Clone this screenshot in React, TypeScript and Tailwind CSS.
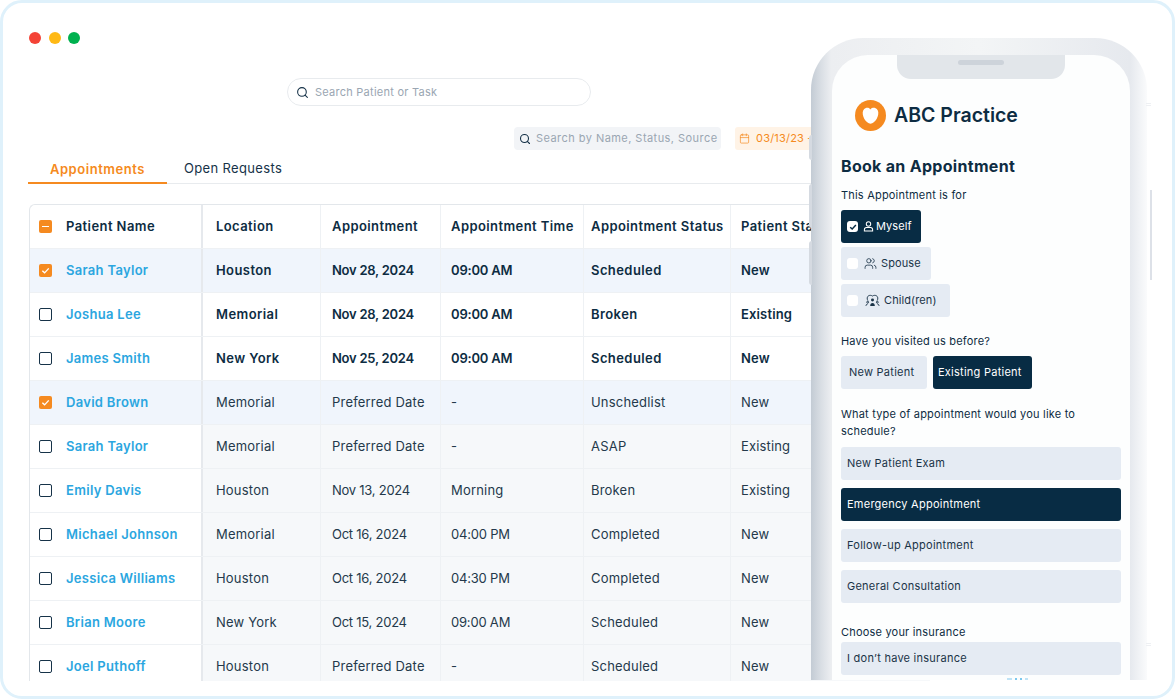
import { Search, Calendar, Users } from "lucide-react";

type Row = { name: string; loc: string; date: string; time: string; status: string; patient: string; checked?: boolean; bold?: boolean };

const rows: Row[] = [
  { name: "Sarah Taylor", loc: "Houston", date: "Nov 28, 2024", time: "09:00 AM", status: "Scheduled", patient: "New", checked: true, bold: true },
  { name: "Joshua Lee", loc: "Memorial", date: "Nov 28, 2024", time: "09:00 AM", status: "Broken", patient: "Existing", bold: true },
  { name: "James Smith", loc: "New York", date: "Nov 25, 2024", time: "09:00 AM", status: "Scheduled", patient: "New", bold: true },
  { name: "David Brown", loc: "Memorial", date: "Preferred Date", time: "-", status: "Unschedlist", patient: "New", checked: true },
  { name: "Sarah Taylor", loc: "Memorial", date: "Preferred Date", time: "-", status: "ASAP", patient: "Existing" },
  { name: "Emily Davis", loc: "Houston", date: "Nov 13, 2024", time: "Morning", status: "Broken", patient: "Existing" },
  { name: "Michael Johnson", loc: "Memorial", date: "Oct 16, 2024", time: "04:00 PM", status: "Completed", patient: "New" },
  { name: "Jessica Williams", loc: "Houston", date: "Oct 16, 2024", time: "04:30 PM", status: "Completed", patient: "New" },
  { name: "Brian Moore", loc: "New York", date: "Oct 15, 2024", time: "09:00 AM", status: "Scheduled", patient: "New" },
  { name: "Joel Puthoff", loc: "Houston", date: "Preferred Date", time: "-", status: "Scheduled", patient: "New" },
];

const gridCols = "grid grid-cols-[173px_117px_120px_143px_147px_200px]";

function Check({ state }: { state: "on" | "off" | "minus" }) {
  if (state === "off") return <span className="block w-[13px] h-[13px] rounded-[2px] border-[1.5px] border-[#163248] bg-white shrink-0" />;
  return (
    <span className="flex items-center justify-center w-[13px] h-[13px] rounded-[2px] bg-[#f58a20] shrink-0">
      {state === "on" ? (
        <svg width="9" height="9" viewBox="0 0 10 10" fill="none"><path d="M1.5 5.2 4 7.6 8.6 2.6" stroke="#fff" strokeWidth="1.5" /></svg>
      ) : (
        <span className="block w-[7px] h-[1.5px] bg-white" />
      )}
    </span>
  );
}

function Cell({ pad, bg, children }: { pad: string; bg: string; children: React.ReactNode }) {
  return <div className={`flex items-center border-l border-[#eef1f4] ${pad} ${bg} whitespace-nowrap`}>{children}</div>;
}

function PersonIcon({ className }: { className: string }) {
  return (
    <svg className={className} viewBox="0 0 12 12" fill="none" stroke="currentColor" strokeWidth="1.100">
      <circle cx="6" cy="3.200" r="2.400" />
      <path d="M1.500 11h9V9.500A2.300 2.300 0 0 0 8.200 7.200H3.800A2.300 2.300 0 0 0 1.500 9.500z" />
    </svg>
  );
}

function ChildIcon({ className }: { className: string }) {
  return (
    <svg className={className} viewBox="0 0 16 14" fill="none" stroke="currentColor" strokeWidth="1">
      <path d="M3 7C1.800 5.500 2 2.600 4 1.800c1.300-.6 2.800-.4 4 .4 1.200-.8 2.700-1 4-.4 2 .8 2.200 3.700 1 5.200" />
      <circle cx="8" cy="6.500" r="1.600" fill="currentColor" stroke="none" />
      <path d="M5.500 12.800c0-2.200 1-3.200 2.500-3.200s2.500 1 2.500 3.200z" fill="currentColor" stroke="none" />
      <circle cx="2.800" cy="8.800" r="1" />
      <circle cx="13.200" cy="8.800" r="1" />
      <path d="M1 12.800c0-1.300.7-2 1.800-2M15 12.800c0-1.300-.7-2-1.800-2" />
    </svg>
  );
}

function Table() {
  return (
    <div className="mt-5 ml-px h-[477px] overflow-hidden rounded-tl-md border-l border-t border-[#e3e7eb] text-[13px] tracking-[0.42px] text-[#0d2c42] w-[1100px]">
      <div className={`${gridCols} h-[44px] font-semibold border-b border-[#eef1f4]`}>
        <div className="flex items-center gap-[14px] pl-[9px] border-r-2 border-[#e6e9ed]">
          <Check state="minus" />
          <span>Patient Name</span>
        </div>
        <div className="flex items-center pl-[13px]">Location</div>
        <div className="flex items-center pl-[11px] border-l border-[#eef1f4]">Appointment</div>
        <div className="flex items-center pl-[10px] border-l border-[#eef1f4] whitespace-nowrap">Appointment Time</div>
        <div className="flex items-center pl-[7px] border-l border-[#eef1f4] whitespace-nowrap">Appointment Status</div>
        <div className="flex items-center pl-[10px] border-l border-[#eef1f4] whitespace-nowrap">Patient Status</div>
      </div>
      {rows.map((r, i) => {
        const bg = r.checked ? "bg-[#f0f5fc]" : r.bold ? "bg-white" : "bg-[#f6f8fa]";
        const left = r.checked ? "bg-[#f0f5fc]" : "bg-white";
        const weight = r.bold ? "font-semibold" : "font-normal text-[#24394b] tracking-[0.2px]";
        return (
          <div key={i} className={`${gridCols} h-[44px] border-b border-[#eef1f4] ${weight}`}>
            <div className={`flex items-center gap-[14px] pl-[9px] border-r-2 border-[#e6e9ed] ${left}`}>
              <Check state={r.checked ? "on" : "off"} />
              <span className="font-semibold text-[#2ba6e0] whitespace-nowrap tracking-[0.3px]">{r.name}</span>
            </div>
            <div className={`flex items-center pl-[13px] whitespace-nowrap ${bg}`}>{r.loc}</div>
            <Cell pad="pl-[11px]" bg={bg}><span className={/\d/.test(r.date) ? "tracking-[-0.25px]" : ""}>{r.date}</span></Cell>
            <Cell pad="pl-[10px]" bg={bg}><span className={/\d/.test(r.time) ? "tracking-[-0.2px]" : ""}>{r.time}</span></Cell>
            <Cell pad="pl-[7px]" bg={bg}>{r.status}</Cell>
            <Cell pad="pl-[10px]" bg={bg}><span className="tracking-[0.15px]">{r.patient}</span></Cell>
          </div>
        );
      })}
    </div>
  );
}

function Logo() {
  return (
    <svg width="31" height="31" viewBox="0 0 31 31" className="shrink-0">
      <circle cx="15.500" cy="15.500" r="15.500" fill="#f58a20" />
      <path d="M15.500 9.200c-1.200-1.100-3-1.700-4.700-1.100-2.500.9-3.500 3.500-3 6.300.5 3.100 2.300 6 4.200 7.700 1.200 1.100 2.600 1.700 3.500 1.700s2.300-.6 3.500-1.700c1.900-1.700 3.700-4.600 4.200-7.700.5-2.800-.5-5.400-3-6.300-1.700-.6-3.500 0-4.700 1.100z" fill="#fff" />
      <path d="M13.500 6.800c1 .4 1.700 1.200 2 2.400" stroke="#f58a20" strokeWidth="0.800" fill="none" />
    </svg>
  );
}

function Phone() {
  const option = "flex items-center h-[33px] rounded-[3px] pl-[6px] bg-[#e5ebf3] text-[#1a3347] font-normal tracking-[0.25px]";
  return (
    <div className="absolute left-[808px] top-[35px] w-[336px] h-[642px] rounded-t-[52px] pl-[21px] pt-[17px] bg-[linear-gradient(90deg,#c3cbd4_0%,#d9dee4_3%,#eceef1_6%,#f3f5f6_50%,#e6e9ee_95%,#fafbfc_100%)]">
      <span className="absolute -left-[2px] top-[97px] w-[3px] h-[25px] rounded-l-sm bg-[#d5dae1]" />
      <span className="absolute -left-[2px] top-[146px] w-[3px] h-[44px] rounded-l-sm bg-[#d5dae1]" />
      <span className="absolute -left-[2px] top-[203px] w-[3px] h-[44px] rounded-l-sm bg-[#d5dae1]" />
      <span className="absolute left-[339px] top-[152px] w-[2px] h-[90px] bg-[#dde1e8]" />
      <span className="absolute left-[335px] top-[65px] w-[5px] h-[3px] border-y border-[#eef0f3]" />
      <span className="absolute left-[335px] top-[605px] w-[5px] h-[3px] border-y border-[#eef0f3]" />
      <div className="relative w-[298px] h-[625px] rounded-t-[36px] bg-[#fdfefe] overflow-hidden px-[9px] text-[#0d2c42] text-[11px] tracking-[0.2px]">
        <div className="absolute left-[65px] top-0 w-[168px] h-[24px] rounded-b-[14px] bg-[#e2e6ea] flex justify-center pt-[5px]">
          <span className="block w-[46px] h-[5px] rounded-full bg-[#cdd3da]" />
        </div>
        <div className="flex items-center gap-2 pt-[45px] pl-[14px]">
          <Logo />
          <span className="text-[19.500px] leading-[30px] -mt-[1px] font-semibold tracking-normal whitespace-nowrap">ABC Practice</span>
        </div>
        <h1 className="mt-[23px] text-[16px] leading-6 font-bold whitespace-nowrap tracking-[0.3px]">Book an Appointment</h1>
        <p className="mt-[8px] leading-[18px]">This Appointment is for</p>
        <div className="mt-[6px] flex flex-col items-start gap-1 font-normal tracking-[0.1px]">
          <div className="flex items-center gap-[4px] h-[33px] w-[80px] rounded-[3px] pl-[6px] bg-[#082c44] text-white">
            <span className="flex items-center justify-center w-[11px] h-[11px] rounded-[3px] bg-white shrink-0">
              <svg width="8" height="8" viewBox="0 0 10 10" fill="none"><path d="M1.500 5.200 4 7.600 8.600 2.600" stroke="#082c44" strokeWidth="1.800" /></svg>
            </span>
            <PersonIcon className="w-[11px] h-[11px] ml-[1px]" />
            <span className="-ml-[2px]">Myself</span>
          </div>
          <div className="flex items-center gap-[4px] h-[33px] w-[90px] rounded-[3px] pl-[6px] bg-[#e5ebf3] text-[#1a3347]">
            <span className="w-[11px] h-[11px] rounded-[3px] bg-white shrink-0" />
            <Users className="w-[13px] h-[13px] ml-[2px]" strokeWidth={1.5} />
            <span>Spouse</span>
          </div>
          <div className="flex items-center gap-[4px] h-[33px] w-[109px] rounded-[3px] pl-[6px] bg-[#e5ebf3] text-[#1a3347]">
            <span className="w-[11px] h-[11px] rounded-[3px] bg-white shrink-0" />
            <ChildIcon className="w-[15px] h-[13px] ml-[3px]" />
            <span>Child(ren)</span>
          </div>
        </div>
        <p className="mt-[15px] leading-[18px]">Have you visited us before?</p>
        <div className="mt-[6px] flex gap-[6px] font-normal tracking-[0.25px]">
          <div className="flex items-center h-[33px] w-[86px] rounded-[3px] pl-2 bg-[#e5ebf3] text-[#1a3347]">New Patient</div>
          <div className="flex items-center h-[33px] w-[99px] rounded-[3px] pl-[5px] bg-[#082c44] text-white">Existing Patient</div>
        </div>
        <p className="mt-[17px] leading-[17px]">What type of appointment would you like to schedule?</p>
        <div className="mt-[7px] flex flex-col gap-2">
          <div className={option}>New Patient Exam</div>
          <div className="flex items-center h-[33px] rounded-[3px] pl-[6px] bg-[#082c44] text-white font-normal tracking-[0.25px]">Emergency Appointment</div>
          <div className={option}>Follow-up Appointment</div>
          <div className={option}>General Consultation</div>
        </div>
        <p className="mt-[20px] leading-[18px]">Choose your insurance</p>
        <div className={`${option} mt-[1px]`}>I don’t have insurance</div>
        <div className="mt-[3px] ml-[166px] flex gap-[3px]">
          <span className="block w-[5px] h-[2px] bg-[#bfe3f6]" />
          <span className="block w-[2px] h-[2px] bg-[#7cc8ee]" />
          <span className="block w-[2px] h-[2px] bg-[#7cc8ee]" />
          <span className="block w-[3px] h-[2px] bg-[#bfe3f6]" />
        </div>
      </div>
    </div>
  );
}

export default function App() {
  return (
    <div className="relative w-[1175px] h-[699px] overflow-hidden bg-white border-[3px] border-[#dff1fb] rounded-[22px] font-['Inter','Liberation_Sans',sans-serif] pl-[25px] pt-[29px]">
      <div className="flex gap-[7.500px] ml-px">
        <span className="w-[12px] h-[12px] rounded-full bg-[#f44336]" />
        <span className="w-[12px] h-[12px] rounded-full bg-[#ffb915]" />
        <span className="w-[12px] h-[12px] rounded-full bg-[#00b14f]" />
      </div>
      <div className="mt-[34px] ml-[259px] w-[304px] h-[28px] flex items-center gap-[6px] pl-[8px] rounded-full border border-[#e8ebee] text-[11px] tracking-[0.25px] text-[#9aa6b2]">
        <Search className="w-[13px] h-[13px] text-[#163248]" strokeWidth={2} />
        <span>Search Patient or Task</span>
      </div>
      <div className="mt-[21px] ml-[486px] flex gap-[14px] h-[23px]">
        <div className="w-[207px] flex items-center gap-[5px] pl-[5px] rounded-[4px] bg-[#f2f4f7] text-[11px] tracking-[0.45px] text-[#9aa6b2] whitespace-nowrap">
          <Search className="w-[12px] h-[12px] text-[#163248] shrink-0" strokeWidth={2.2} />
          <span>Search by Name, Status, Source</span>
        </div>
        <div className="w-[110px] flex items-center gap-[6px] pl-[4px] rounded-[3px] bg-[#fff3e6] text-[11px] tracking-[0.2px] text-[#f58a20] whitespace-nowrap">
          <Calendar className="w-[11px] h-[11px] shrink-0" strokeWidth={1.5} />
          <span>03/13/23 - 03/20/23</span>
        </div>
      </div>
      <div className="mt-[6px] h-[28px] flex items-end border-b border-[#e8ebee] text-[13px] tracking-[0.35px] w-[1000px]">
        <div className="w-[139px] h-[28px] -mb-px border-b-2 border-[#f58a20] text-center font-semibold text-[#f58a20] leading-[26px] tracking-[0.55px]">Appointments</div>
        <div className="ml-[17px] h-[28px] text-[#163248] leading-[27px]">Open Requests</div>
      </div>
      <Table />
      <Phone />
    </div>
  );
}
